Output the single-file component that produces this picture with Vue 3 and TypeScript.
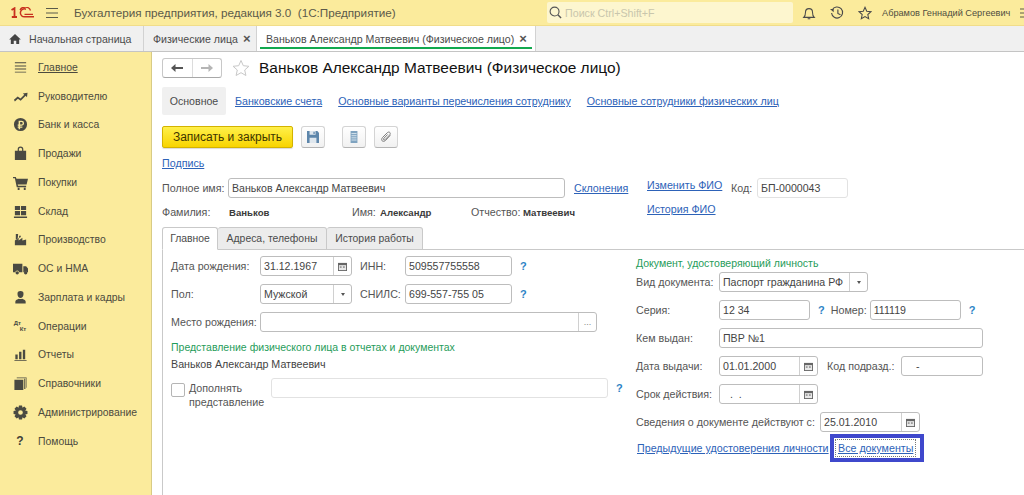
<script setup lang="ts">
interface MenuItem {
  label: string;
  d?: string;
  text?: string;
}

function gearPath(): string {
  const c = 8;
  const points: string[] = [];
  for (let i = 0; i < 8; i++) {
    const a = (i * Math.PI) / 4;
    for (const [r, off] of [[5.4, -0.42], [7.6, -0.22], [7.6, 0.22], [5.4, 0.42]]) {
      const x = c + r * Math.cos(a + off);
      const y = c + r * Math.sin(a + off);
      points.push(`${x.toFixed(2)} ${y.toFixed(2)}`);
    }
  }
  return `M${points.join("L")}ZM8 5.5a2.5 2.5 0 1 0 0 5a2.5 2.5 0 1 0 0-5Z`;
}

const menu: MenuItem[] = [
  { label: "Главное", d: "M2 2.500h12v1H2ZM2 5.800h12v1H2ZM2 9.100h12v1H2ZM2 12.400h12v1H2Z" },
  { label: "Руководителю", d: "M1 11.500L5 8l3 2 4-4-1.500-1.200L15.500 4l-.6 4.700L13.500 7.300 8.200 12.400 5.200 10.400 2 13.200Z" },
  { label: "Банк и касса", d: "M8 1a7 7 0 1 0 0 14A7 7 0 1 0 8 1ZM6 4h3.200a2.600 2.600 0 0 1 0 5.200H7.600v1H10v1.300H7.600V13H6v-1.500H5v-1.300h1v-1H5V7.900h1ZM7.600 5.400v2.500h1.500a1.250 1.250 0 0 0 0-2.500Z" },
  { label: "Продажи", d: "M2 5h3V3.500a3 3 0 0 1 6 0V5h3v10H2ZM6.300 5h3.400V3.500a1.700 1.700 0 0 0-3.400 0Z" },
  { label: "Покупки", d: "M0 2h3l.7 2H16l-1.500 6H5l.4 1.500H14V13H4L2 3.400H0ZM5 13.500h2V16H5ZM11.500 13.500h2V16h-2Z" },
  { label: "Склад", d: "M2 2h5.500v4.500H2ZM8.500 2H14v4.500H8.500ZM2 7.500h5.500V12H2ZM8.500 7.500H14V12H8.500ZM1 13.200h14V15H1Z" },
  { label: "Производство", d: "M2 14V9l4-3v3l4-3v3l4-1v6ZM3 2h2.500L5 7.500 3 8.500ZM6.500 4h2L8 5.500 6.500 6.500Z" },
  { label: "ОС и НМА", d: "M0 3h10v9H6.500a2 2 0 0 0-4 0H0ZM11 5.500h3L16 8v4h-.7a2 2 0 0 0-3.600 0H11ZM4.500 10.800a1.800 1.800 0 1 0 0 3.600a1.800 1.800 0 1 0 0-3.600ZM13.500 10.800a1.800 1.800 0 1 0 0 3.600a1.800 1.800 0 1 0 0-3.600Z" },
  { label: "Зарплата и кадры", d: "M8 1a3.200 3.200 0 0 1 3.200 3.500C11.200 7 9.600 8.500 8 8.500S4.800 7 4.800 4.500A3.200 3.200 0 0 1 8 1ZM2.500 14.500v-2.300C2.500 10.500 5 9.700 6.200 9.200 7.300 9.900 8.700 9.900 9.800 9.200 11 9.700 13.500 10.500 13.500 12.200v2.300Z" },
  { label: "Операции", text: "Дт Кт" },
  { label: "Отчеты", d: "M2.500 8h2.500v5H2.500ZM6.500 5h2.500v8H6.500ZM10.500 3h2.500v10h-2.500ZM1.500 14h13v1h-13Z" },
  { label: "Справочники", d: "M1.500 4h9.500v11H1.500ZM12 3h1.200v10.800H12ZM4 1.500h10.500V12.500h-.5V2.500H4Z" },
  { label: "Администрирование", d: gearPath() },
  { label: "Помощь", text: "?" },
];

const calendarRects = [3, 6.5, 10];
</script>

<template>
  <div class="page">
    <header class="topbar">
      <svg class="logo" viewBox="0 0 23 11" aria-label="1С">
        <path d="M.5 3L3.500 1.200V10M.8 10H6" fill="none" stroke="#c8311e" stroke-width="1.800" />
        <path d="M15 2.200A4 4 0 1 0 14 9.800H23" fill="none" stroke="#c8311e" stroke-width="1.500" />
        <path d="M19.500 3.500A5.500 4.500 0 0 0 9 3M13.500 7.300H22" fill="none" stroke="#c8311e" stroke-width="1.300" />
      </svg>
      <svg class="burger" viewBox="0 0 12 10">
        <path d="M0 .5h12M0 5h12M0 9.500h12" stroke="#5a5a4a" stroke-width="1" />
      </svg>
      <span class="app-title">Бухгалтерия предприятия, редакция 3.0&nbsp; (1С:Предприятие)</span>
      <div class="search">
        <svg class="search-icon" viewBox="0 0 14 14">
          <circle cx="6" cy="6" r="4.800" fill="none" stroke="#555" stroke-width="1.200" />
          <path d="M9.500 9.500L13 13" stroke="#555" stroke-width="1.600" />
        </svg>
        <span>Поиск Ctrl+Shift+F</span>
      </div>
      <svg class="top-icon" viewBox="0 0 16 16">
        <path d="M2 13c1.500-1.500 2-3 2-6a4 4 0 0 1 8 0c0 3 .5 4.500 2 6ZM6.500 14.500h3" fill="none" stroke="#4a4a4a" stroke-width="1.200" />
      </svg>
      <svg class="top-icon" viewBox="0 0 16 16">
        <path d="M2.500 4.500A6.300 6.300 0 1 1 1.800 8M9 4v4.500l3 1.500" fill="none" stroke="#4a4a4a" stroke-width="1.300" />
        <path d="M0 3.500h4.200v3.500Z" fill="#4a4a4a" />
      </svg>
      <svg class="top-icon" viewBox="0 0 16 16">
        <path d="M8 1.500l2 4.500 4.800.5-3.600 3.200 1 4.800L8 12.100 3.800 14.500l1-4.800L1.200 6.500 6 6Z" fill="none" stroke="#4a4a4a" stroke-width="1.200" />
      </svg>
      <span class="user">Абрамов Геннадий Сергеевич</span>
      <svg class="user-menu" viewBox="0 0 8 10">
        <path d="M0 1h8M0 5h8M0 9h8" stroke="#5a5a4a" stroke-width="1" />
      </svg>
    </header>

    <nav class="tabbar">
      <div class="doc-tab home-tab">
        <svg class="home-icon" viewBox="0 0 14 12">
          <path d="M7 0L14 6.500H12V12H8.500V8h-3v4H2V6.500H0Z" fill="#444" />
        </svg>
        Начальная страница
      </div>
      <div class="doc-tab list-tab">Физические лица <span class="close">×</span></div>
      <div class="doc-tab active-tab">Ваньков Александр Матвеевич (Физическое лицо) <span class="close">×</span></div>
    </nav>

    <div class="body">
      <aside class="sidebar">
        <div v-for="(item, i) in menu" :key="item.label" class="menu-item">
          <span class="menu-icon">
            <svg v-if="item.d" viewBox="0 0 16 16">
              <path :d="item.d" fill="#4a4a42" fill-rule="evenodd" />
            </svg>
            <span v-else-if="item.text === '?'" class="menu-q">?</span>
            <span v-else class="menu-dk"><i>Дт</i><i>Кт</i></span>
          </span>
          <span :class="{ 'menu-current': i === 0 }">{{ item.label }}</span>
        </div>
      </aside>

      <main class="content">
        <div class="title-row">
          <div class="history-nav">
            <button class="nav-btn">
              <svg viewBox="0 0 12 10"><path d="M0 5l4.500-4v3H12v2H4.500v3Z" fill="#555" /></svg>
            </button>
            <button class="nav-btn">
              <svg viewBox="0 0 12 10"><path d="M12 5L7.500 1v3H0v2h7.500v3Z" fill="#b5b5b5" /></svg>
            </button>
          </div>
          <svg class="fav-star" viewBox="0 0 18 18">
            <path d="M9 1.500l2.300 5.200 5.600.6-4.200 3.700 1.200 5.500L9 13.700 4.100 16.500l1.200-5.500L1.100 7.300l5.600-.6Z" fill="none" stroke="#c8c8c8" stroke-width="1" />
          </svg>
          <h1 class="title">Ваньков Александр Матвеевич (Физическое лицо)</h1>
        </div>

        <div class="subnav">
          <span class="subnav-current">Основное</span>
          <a class="link sub-bank">Банковские счета</a>
          <a class="link sub-pay">Основные варианты перечисления сотруднику</a>
          <a class="link sub-emp">Основные сотрудники физических лиц</a>
        </div>

        <div class="toolbar">
          <button class="primary-btn">Записать и закрыть</button>
          <button class="tool-btn">
            <svg viewBox="0 0 14 14">
              <path d="M0 0h12l2 2v12H0Z" fill="#5d86ab" />
              <path d="M3 0h7v4.500H3ZM3 8h8v6H3Z" fill="#dfe7ee" />
              <path d="M7.500 1h1.500v2.500H7.500Z" fill="#5d86ab" />
            </svg>
          </button>
          <button class="tool-btn tool-gap">
            <svg viewBox="0 0 14 14">
              <path d="M3 0h8v14H3Z" fill="#7fa3c0" />
              <path d="M4 3h6M4 5.500h6M4 8h6M4 10.500h6" stroke="#e4edf3" stroke-width="1" />
            </svg>
          </button>
          <button class="tool-btn">
            <svg viewBox="0 0 14 14">
              <path d="M12 5L6.500 11c-1.200 1.300-3.200 1.300-4 .5s-.8-2.600.5-4L8.500 2c1-1 2.300-1 3-.3s.6 2-.3 3L6 10c-.6.6-1.300.6-1.700.2S4 9 4.600 8.400L9 4" fill="none" stroke="#777" stroke-width="1.100" />
            </svg>
          </button>
        </div>

        <a class="link sign-link">Подпись</a>

        <div class="name-block">
          <div class="name-left">
            <div class="row">
              <label class="lbl w-66">Полное имя:</label>
              <div class="field w-337">Ваньков Александр Матвеевич</div>
              <a class="link decl-link">Склонения</a>
            </div>
            <div class="fio-row">
              <span class="lbl w-67">Фамилия:</span>
              <b class="fio-val w-123">Ваньков</b>
              <span class="lbl w-28">Имя:</span>
              <b class="fio-val w-91">Александр</b>
              <span class="lbl w-52">Отчество:</span>
              <b class="fio-val">Матвеевич</b>
            </div>
          </div>
          <div class="name-links">
            <a class="link">Изменить ФИО</a>
            <a class="link history-link">История ФИО</a>
          </div>
          <div class="code-box">
            <label class="lbl w-26">Код:</label>
            <div class="field field-soft w-91">БП-0000043</div>
          </div>
        </div>

        <div class="tabs">
          <span class="tab tab-active">Главное</span>
          <span class="tab tab-addr">Адреса, телефоны</span>
          <span class="tab tab-hist">История работы</span>
          <span class="tabs-line"></span>
        </div>

        <section class="panel">
          <div class="col-left">
            <div class="row">
              <label class="lbl w-89">Дата рождения:</label>
              <div class="field field-btn w-92">
                <span class="field-text">31.12.1967</span>
                <span class="side-btn">
                  <svg class="cal" viewBox="0 0 10 10">
                    <path d="M0 1h10v9H0Z" fill="#666" />
                    <rect x="1" y="3.500" width="8" height="5.500" fill="#e8e8e8" />
                    <rect v-for="x in calendarRects" :key="x" :x="x - 1" y="5" width="2" height="1.200" fill="#666" />
                  </svg>
                </span>
              </div>
              <label class="lbl w-45 ml-8">ИНН:</label>
              <div class="field w-107">509557755558</div>
              <span class="hint ml-8">?</span>
            </div>
            <div class="row mt-8">
              <label class="lbl w-89">Пол:</label>
              <div class="field field-btn w-92">
                <span class="field-text">Мужской</span>
                <span class="side-btn"><span class="caret"></span></span>
              </div>
              <label class="lbl w-45 ml-8">СНИЛС:</label>
              <div class="field w-107">699-557-755 05</div>
              <span class="hint ml-8">?</span>
            </div>
            <div class="row mt-8">
              <label class="lbl w-89">Место рождения:</label>
              <div class="field field-btn w-337">
                <span class="field-text"></span>
                <span class="side-btn dots">...</span>
              </div>
            </div>
            <div class="group-title rep-title">Представление физического лица в отчетах и документах</div>
            <div class="rep-name">Ваньков Александр Матвеевич</div>
            <div class="extra-row">
              <span class="checkbox"></span>
              <span class="extra-label">Дополнять представление</span>
              <div class="field field-soft w-337"></div>
              <span class="hint ml-8">?</span>
            </div>
          </div>

          <div class="col-right">
            <div class="group-title">Документ, удостоверяющий личность</div>
            <div class="row doc-first">
              <label class="lbl w-83">Вид документа:</label>
              <div class="field field-btn w-149">
                <span class="field-text">Паспорт гражданина РФ</span>
                <span class="side-btn"><span class="caret"></span></span>
              </div>
            </div>
            <div class="row mt-8">
              <label class="lbl w-83">Серия:</label>
              <div class="field w-91">12 34</div>
              <span class="hint ml-8">?</span>
              <label class="lbl ml-6 w-39">Номер:</label>
              <div class="field w-91">111119</div>
              <span class="hint ml-8">?</span>
            </div>
            <div class="row mt-8">
              <label class="lbl w-83">Кем выдан:</label>
              <div class="field w-264">ПВР №1</div>
            </div>
            <div class="row mt-8">
              <label class="lbl w-83">Дата выдачи:</label>
              <div class="field field-btn w-99">
                <span class="field-text">01.01.2000</span>
                <span class="side-btn">
                  <svg class="cal" viewBox="0 0 10 10">
                    <path d="M0 1h10v9H0Z" fill="#666" />
                    <rect x="1" y="3.500" width="8" height="5.500" fill="#e8e8e8" />
                    <rect v-for="x in calendarRects" :key="x" :x="x - 1" y="5" width="2" height="1.200" fill="#666" />
                  </svg>
                </span>
              </div>
              <label class="lbl ml-9 w-74">Код подразд.:</label>
              <div class="field w-82 dash">-</div>
            </div>
            <div class="row mt-8">
              <label class="lbl w-83">Срок действия:</label>
              <div class="field field-btn w-99">
                <span class="field-text empty-date">. &nbsp;.</span>
                <span class="side-btn">
                  <svg class="cal" viewBox="0 0 10 10">
                    <path d="M0 1h10v9H0Z" fill="#666" />
                    <rect x="1" y="3.500" width="8" height="5.500" fill="#e8e8e8" />
                    <rect v-for="x in calendarRects" :key="x" :x="x - 1" y="5" width="2" height="1.200" fill="#666" />
                  </svg>
                </span>
              </div>
            </div>
            <div class="row mt-8">
              <label class="lbl w-184">Сведения о документе действуют с:</label>
              <div class="field field-btn w-100">
                <span class="field-text">25.01.2010</span>
                <span class="side-btn">
                  <svg class="cal" viewBox="0 0 10 10">
                    <path d="M0 1h10v9H0Z" fill="#666" />
                    <rect x="1" y="3.500" width="8" height="5.500" fill="#e8e8e8" />
                    <rect v-for="x in calendarRects" :key="x" :x="x - 1" y="5" width="2" height="1.200" fill="#666" />
                  </svg>
                </span>
              </div>
            </div>
            <div class="doc-links">
              <a class="link prev-docs">Предыдущие удостоверения личности</a>
              <span class="all-docs"><a class="link all-docs-link">Все документы</a></span>
            </div>
          </div>
        </section>
      </main>
    </div>
  </div>
</template>

<style>
html,
body {
  margin: 0;
  background: #fff;
  overflow: hidden;
}
</style>

<style scoped>
.page {
  width: 1024px;
  height: 495px;
  overflow: hidden;
  display: flex;
  flex-direction: column;
  font-family: "Liberation Sans", Arial, sans-serif;
  font-size: 10.700px;
  color: #4b4b4b;
}

.topbar {
  height: 25px;
  flex: none;
  display: flex;
  align-items: center;
  background: #fbeb9c;
  border-bottom: 1px solid #f1dd8a;
}

.logo {
  width: 23px;
  height: 11px;
  margin-left: 11px;
  flex: none;
}

.burger {
  width: 12px;
  height: 10px;
  margin-left: 12px;
  flex: none;
}

.app-title {
  margin-left: 16px;
  font-size: 11.700px;
  color: #5c5a4a;
  white-space: nowrap;
  width: 473px;
  flex: none;
}

.search {
  width: 246px;
  height: 21px;
  box-sizing: border-box;
  padding-left: 2px;
  display: flex;
  align-items: center;
  gap: 3px;
  flex: none;
  background: #fdf6cf;
  border-radius: 2px;
  color: #c9c6ad;
}

.search-icon {
  width: 13px;
  height: 13px;
}

.top-icon {
  width: 14px;
  height: 14px;
  margin-left: 14px;
  flex: none;
}

.search + .top-icon {
  margin-left: 9px;
}

.user {
  margin-left: 10px;
  font-size: 9.200px;
  white-space: nowrap;
  color: #4f4d40;
  width: 131px;
  flex: none;
}

.user-menu {
  width: 8px;
  height: 10px;
  margin-left: 7px;
  flex: none;
}

.tabbar {
  height: 25px;
  flex: none;
  display: flex;
  background: #f0f0f0;
  border-bottom: 1px solid #c4c4c4;
  white-space: nowrap;
  font-size: 10.600px;
}

.doc-tab {
  display: flex;
  align-items: center;
  box-sizing: border-box;
  border-right: 1px solid #d2d2d2;
  height: 25px;
}

.home-tab {
  width: 144px;
  padding-left: 9px;
}

.home-icon {
  width: 12px;
  height: 10px;
  margin-right: 8px;
}

.list-tab {
  width: 113px;
  padding-left: 9px;
}

.active-tab {
  width: 279px;
  padding-left: 9px;
  background: #fff linear-gradient(#12a84e, #12a84e) no-repeat 3px 21px / 272px 2px;
}

.close {
  margin-left: 5px;
  font-weight: bold;
  font-size: 13px;
  line-height: 1;
  color: #555;
}

.body {
  flex: 1;
  display: flex;
  min-height: 0;
}

.sidebar {
  width: 152px;
  flex: none;
  box-sizing: border-box;
  padding-top: 1px;
  background: #fbeb9c;
  border-right: 1px solid #d8cb85;
  font-size: 10.400px;
}

.menu-item {
  height: 28.750px;
  display: flex;
  align-items: center;
  padding-left: 12px;
  color: #4b4a3e;
  white-space: nowrap;
}

.menu-icon {
  width: 16px;
  height: 16px;
  margin-right: 10px;
  display: flex;
  align-items: center;
  justify-content: center;
  flex: none;
}

.menu-icon svg {
  width: 15px;
  height: 15px;
}

.menu-current {
  text-decoration: underline;
}

.menu-q {
  font-weight: bold;
  font-size: 12px;
  color: #3f3f38;
}

.menu-dk {
  display: flex;
  flex-direction: column;
  font-size: 6px;
  font-weight: bold;
  line-height: 6px;
  color: #4a4a42;
}

.menu-dk i {
  font-style: normal;
}

.menu-dk i:last-child {
  margin-left: 6px;
}

.content {
  flex: 1;
  min-width: 0;
  padding: 6px 0 0 10px;
  background: #fff;
}

.title-row {
  display: flex;
  align-items: center;
  height: 20px;
}

.history-nav {
  width: 60px;
  height: 20px;
  box-sizing: border-box;
  display: flex;
  border: 1px solid #c8c8c8;
  border-bottom-color: #a8a8a8;
  border-radius: 3px;
}

.nav-btn {
  flex: 1;
  border: 0;
  padding: 0;
  background: transparent;
  display: flex;
  align-items: center;
  justify-content: center;
}

.nav-btn:first-child {
  border-right: 1px solid #dcdcdc;
}

.nav-btn svg {
  width: 12px;
  height: 10px;
}

.fav-star {
  width: 18px;
  height: 18px;
  margin-left: 10px;
}

.title {
  margin: 0 0 0 9px;
  font-size: 15.450px;
  font-weight: normal;
  color: #111;
  white-space: nowrap;
}

.subnav {
  display: flex;
  align-items: center;
  margin-top: 9px;
  height: 28px;
  white-space: nowrap;
  font-size: 10.600px;
}

.subnav-current {
  width: 64px;
  height: 28px;
  line-height: 28px;
  text-align: center;
  background: #f0f0f0;
  border-radius: 2px;
}

.link {
  color: #2d62b8;
  text-decoration: underline;
  white-space: nowrap;
  font-size: 10.700px;
}

.sub-bank {
  margin-left: 9px;
}

.sub-pay {
  margin-left: 16px;
}

.sub-emp {
  margin-left: 16px;
}

.toolbar {
  display: flex;
  margin-top: 11px;
  height: 22px;
}

.primary-btn {
  width: 131px;
  height: 22px;
  padding: 0;
  border: 1px solid #d3b300;
  border-radius: 2px;
  background: linear-gradient(#fff04a, #f8d400);
  font: inherit;
  font-size: 12px;
  color: #3d3500;
  box-shadow: 0 1px 1px rgba(0, 0, 0, 0.15);
}

.tool-btn {
  width: 24px;
  height: 22px;
  margin-left: 8px;
  padding: 0;
  display: flex;
  align-items: center;
  justify-content: center;
  border: 1px solid #d4d4d4;
  border-bottom-color: #b4b4b4;
  border-radius: 3px;
  background: linear-gradient(#fff, #f1f1f1);
}

.tool-gap {
  margin-left: 17px;
}

.tool-btn svg {
  width: 12px;
  height: 12px;
}

.sign-link {
  display: block;
  width: max-content;
  margin-top: 8px;
  height: 14px;
  line-height: 14px;
}

.name-block {
  display: flex;
  margin-top: 8px;
}

.name-left {
  width: 485px;
}

.row {
  display: flex;
  align-items: center;
  height: 20px;
  white-space: nowrap;
}

.lbl {
  color: #555;
  flex: none;
}

.field {
  height: 20px;
  box-sizing: border-box;
  flex: none;
  display: flex;
  align-items: center;
  padding-left: 3px;
  background: #fff;
  border: 1px solid #bdbdbd;
  border-radius: 3px;
  color: #444;
  white-space: nowrap;
  font-size: 10.600px;
}

.field-soft {
  border-color: #e2e2e2;
}

.field-btn {
  padding-left: 0;
}

.field-text {
  flex: 1;
  padding-left: 3px;
}

.side-btn {
  width: 17px;
  height: 18px;
  flex: none;
  display: flex;
  align-items: center;
  justify-content: center;
  border-left: 1px solid #d0d0d0;
}

.caret {
  width: 0;
  height: 0;
  border-left: 2.500px solid transparent;
  border-right: 2.500px solid transparent;
  border-top: 3px solid #555;
}

.cal {
  width: 9px;
  height: 9px;
}

.dots {
  font-size: 9px;
  color: #888;
}

.dash {
  padding-left: 14px;
}

.empty-date {
  padding-left: 10px;
}

.decl-link {
  margin-left: 9px;
}

.fio-row {
  display: flex;
  align-items: center;
  height: 14px;
  margin-top: 7px;
  white-space: nowrap;
}

.fio-val {
  color: #3a3a3a;
  font-size: 9.600px;
  flex: none;
}

.name-links {
  display: flex;
  flex-direction: column;
  align-items: flex-start;
  width: 84px;
}

.name-links .link {
  height: 14px;
  line-height: 14px;
}

.history-link {
  margin-top: 10px;
}

.code-box {
  display: flex;
  align-items: center;
  height: 20px;
}

.tabs {
  display: flex;
  height: 23px;
  margin-top: 8px;
  font-size: 10.400px;
}

.tab {
  box-sizing: border-box;
  height: 23px;
  display: flex;
  align-items: center;
  justify-content: center;
  border: 1px solid #c9c9c9;
  border-left: 0;
  background: #ececec;
  border-radius: 3px 3px 0 0;
  color: #4b4b4b;
}

.tab-active {
  width: 56px;
  background: #fff;
  border-bottom-color: #fff;
  border-left: 1px solid #c9c9c9;
}

.tab-addr {
  width: 109px;
}

.tab-hist {
  width: 96px;
}

.tabs-line {
  flex: 1;
  border-bottom: 1px solid #c9c9c9;
}

.panel {
  display: flex;
  height: 245px;
  box-sizing: border-box;
  padding: 6px 0 0 8px;
  border-left: 1px solid #c9c9c9;
}

.col-left {
  width: 465px;
  flex: none;
}

.col-right {
  flex: 1;
  min-width: 0;
}

.group-title {
  color: #1f9c5a;
  height: 14px;
  line-height: 14px;
  white-space: nowrap;
  font-size: 10.500px;
}

.rep-title {
  margin-top: 8px;
}

.rep-name {
  margin-top: 3px;
  height: 14px;
  line-height: 14px;
  color: #444;
}

.extra-row {
  display: flex;
  align-items: flex-start;
  margin-top: 7px;
}

.checkbox {
  width: 12px;
  height: 12px;
  margin-top: 5px;
  flex: none;
  border: 1px solid #b5b5b5;
  border-radius: 2px;
}

.extra-label {
  width: 82px;
  margin-left: 4px;
  margin-top: 4px;
  line-height: 13.500px;
  color: #555;
  flex: none;
}

.hint {
  color: #2d84c6;
  font-weight: bold;
  font-size: 11px;
}

.extra-row .hint {
  line-height: 20px;
}

.doc-first {
  margin-top: 2px;
}

.doc-links {
  display: flex;
  align-items: center;
  margin-top: 2px;
  white-space: nowrap;
}

.prev-docs {
  margin-left: 1px;
  width: 193px;
  flex: none;
}

.all-docs {
  display: block;
  padding: 2px;
  border: 4px solid #3f48cc;
  width: 94px;
  height: 28px;
  box-sizing: border-box;
}

.all-docs-link {
  display: block;
  outline: 1px dotted #777;
  outline-offset: 0;
  padding: 0 2px;
  line-height: 16px;
  width: 79px;
  box-sizing: border-box;
}

.mt-8 { margin-top: 8px; }
.ml-6 { margin-left: 6px; }
.ml-8 { margin-left: 8px; }
.ml-9 { margin-left: 9px; }
.w-26 { width: 26px; }
.w-28 { width: 28px; }
.w-39 { width: 39px; }
.w-45 { width: 45px; }
.w-52 { width: 52px; }
.w-66 { width: 66px; }
.w-67 { width: 67px; }
.w-74 { width: 74px; }
.w-82 { width: 82px; }
.w-83 { width: 83px; }
.w-89 { width: 89px; }
.w-91 { width: 91px; }
.w-92 { width: 92px; }
.w-99 { width: 99px; }
.w-100 { width: 100px; }
.w-107 { width: 107px; }
.w-123 { width: 123px; }
.w-149 { width: 149px; }
.w-184 { width: 184px; }
.w-264 { width: 264px; }
.w-337 { width: 337px; }
</style>
